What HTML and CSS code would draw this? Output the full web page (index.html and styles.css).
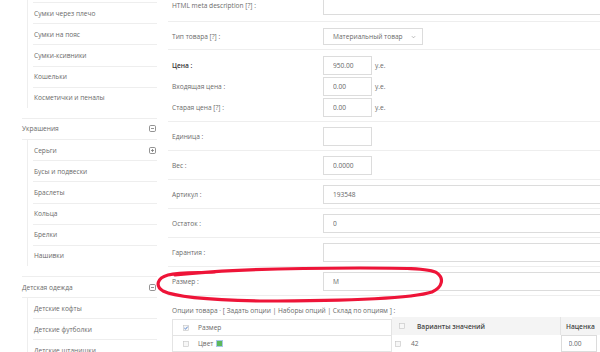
FILE: index.html
```html
<!DOCTYPE html>
<html lang="ru">
<head>
    <meta charset="UTF-8">
    <meta name="viewport" content="width=device-width, initial-scale=1.0">
    <title>Редактирование товара</title>
    <link rel="stylesheet" href="styles.css">
</head>
<body>
    <div class="page">
        <aside class="sidebar">
            <ul class="sub first">
                <li>Сумки через плечо</li>
                <li>Сумки на пояс</li>
                <li>Сумки-ксивники</li>
                <li>Кошельки</li>
                <li>Косметички и пеналы</li>
            </ul>

            <div class="group">
                <div class="group-head">
                    <span>Украшения</span>
                    <svg class="tree-icon" viewBox="0 0 7 7"><rect x="0.5" y="0.5" width="6" height="6" rx="1.2"/><path d="M2 3.5h3"/></svg>
                </div>
                <ul class="sub">
                    <li>
                        <span>Серьги</span>
                        <svg class="tree-icon" viewBox="0 0 7 7"><rect x="0.5" y="0.5" width="6" height="6" rx="1.2"/><path d="M2 3.5h3M3.5 2v3"/></svg>
                    </li>
                    <li>Бусы и подвески</li>
                    <li>Браслеты</li>
                    <li>Кольца</li>
                    <li>Брелки</li>
                    <li>Нашивки</li>
                </ul>
            </div>

            <div class="group">
                <div class="group-head">
                    <span>Детская одежда</span>
                    <svg class="tree-icon" viewBox="0 0 7 7"><rect x="0.5" y="0.5" width="6" height="6" rx="1.2"/><path d="M2 3.5h3"/></svg>
                </div>
                <ul class="sub">
                    <li>Детские кофты</li>
                    <li>Детские футболки</li>
                    <li>Детские штанишки</li>
                </ul>
            </div>
        </aside>

        <main class="form">
            <div class="row meta">
                <label>HTML meta description [?] :</label>
                <input class="field wide" type="text" value="">
            </div>

            <div class="row type">
                <label>Тип товара [?] :</label>
                <div class="select">
                    <span>Материальный товар</span>
                    <svg class="chevron" viewBox="0 0 6 4"><path d="M1 1l2 2 2-2"/></svg>
                </div>
            </div>

            <div class="row price">
                <div class="line">
                    <label class="strong">Цена :</label>
                    <input class="field short" type="text" value="950.00">
                    <span class="unit">у.е.</span>
                </div>
                <div class="line">
                    <label>Входящая цена :</label>
                    <input class="field short" type="text" value="0.00">
                    <span class="unit">у.е.</span>
                </div>
                <div class="line">
                    <label>Старая цена [?] :</label>
                    <input class="field short" type="text" value="0.00">
                    <span class="unit">у.е.</span>
                </div>
            </div>

            <div class="row">
                <label>Единица :</label>
                <input class="field short" type="text" value="">
            </div>

            <div class="row">
                <label>Вес :</label>
                <input class="field short" type="text" value="0.0000">
            </div>

            <div class="row">
                <label>Артикул :</label>
                <input class="field wide" type="text" value="193548">
            </div>

            <div class="row">
                <label>Остаток :</label>
                <input class="field wide" type="text" value="0">
            </div>

            <div class="row">
                <label>Гарантия :</label>
                <input class="field wide" type="text" value="">
            </div>

            <div class="row">
                <label>Размер :</label>
                <input class="field wide" type="text" value="M">
            </div>

            <div class="options-title">
                Опции товара · [ Задать опции | Наборы опций | Склад по опциям ] :
            </div>

            <div class="options">
                <table class="opt-list">
                    <tr>
                        <td class="cb-cell">
                            <svg class="cb" viewBox="0 0 7 7"><rect x="0.5" y="0.5" width="6" height="6"/><path class="tick" d="M1.6 3.6l1.3 1.3 2.6-3"/></svg>
                        </td>
                        <td>Размер</td>
                    </tr>
                    <tr>
                        <td class="cb-cell">
                            <svg class="cb" viewBox="0 0 7 7"><rect x="0.5" y="0.5" width="6" height="6"/></svg>
                        </td>
                        <td>Цвет <span class="swatch"></span></td>
                    </tr>
                </table>

                <table class="variants">
                    <tr class="head">
                        <th class="cb-cell">
                            <svg class="cb" viewBox="0 0 7 7"><rect x="0.5" y="0.5" width="6" height="6"/></svg>
                        </th>
                        <th class="name">Варианты значений</th>
                        <th class="markup">Наценка</th>
                    </tr>
                    <tr>
                        <td class="cb-cell row-cb">
                            <svg class="cb" viewBox="0 0 7 7"><rect x="0.5" y="0.5" width="6" height="6"/></svg>
                        </td>
                        <td class="value">42</td>
                        <td class="markup-cell"><input class="field markup-field" type="text" value="0.00"></td>
                    </tr>
                </table>
            </div>
        </main>

        <svg class="marker" viewBox="0 0 600 352">
            <path d="M175 275 C220 270 300 268 360 268 C400 268 430 268 437 273 C444 278 443 287 432 292 C410 299 330 301 260 301 C210 300 175 297 163 291 C155 286 157 278 168 275 C180 272 200 273 215 272"/>
        </svg>
    </div>
</body>
</html>
```

FILE: styles.css
```css
html,
body {
    margin: 0;
    padding: 0;
}

body {
    font-family: "Open Sans", sans-serif;
    font-size: 6.6px;
    color: #6a6a6a;
    background-color: #ffffff;
    overflow: hidden;
}

.page {
    position: relative;
    display: flex;
    width: 600px;
    height: 352px;
    overflow: hidden;
}

/* ---- sidebar tree ---- */

.sidebar {
    flex: none;
    width: 135px;
    padding: 0 3px 0 22px;
}

.sub {
    list-style: none;
    margin: 0 0 0 5px;
    padding: 0 0 0 5px;
    border-left: 1px solid #eeeeee;
}

.sub.first {
    padding-top: 2px;
}

.sub.first li:first-child {
    border-top: 1px solid #eeeeee;
}

.sub li {
    display: flex;
    align-items: center;
    justify-content: space-between;
    height: 20.2px;
    padding-left: 1px;
    border-bottom: 1px solid #eeeeee;
    white-space: nowrap;
}

.sub li:last-child {
    border-bottom: none;
}

.group {
    margin-top: 10px;
}

.group-head {
    display: flex;
    align-items: center;
    justify-content: space-between;
    height: 20px;
    border-top: 1px solid #eeeeee;
    border-bottom: 1px solid #eeeeee;
}

.tree-icon {
    width: 7px;
    height: 7px;
    margin-right: 1px;
    fill: none;
    stroke: #777777;
    stroke-width: 0.8;
}

/* ---- form ---- */

.form {
    flex: 1;
    min-width: 0;
    padding-left: 8px;
}

.row {
    display: flex;
    align-items: center;
    padding: 5px 0 4px 4px;
    border-bottom: 1px solid #eeeeee;
}

.row.meta {
    margin-top: -9px;
    padding-bottom: 6px;
}

.row.type {
    padding-top: 6px;
}

.row.price {
    flex-direction: column;
    align-items: stretch;
    gap: 2px;
    padding-top: 6px;
}

.line {
    display: flex;
    align-items: center;
}

label {
    flex: none;
    width: 151px;
    white-space: nowrap;
}

label.strong {
    color: #333333;
    font-weight: 600;
}

.field {
    box-sizing: border-box;
    height: 19px;
    padding: 0 9px;
    border: 1px solid #dcdcdc;
    border-radius: 0;
    background-color: #ffffff;
    font-family: inherit;
    font-size: inherit;
    color: #666666;
    outline: none;
}

.field.short {
    width: 49px;
}

.field.wide {
    flex: none;
    width: 320px;
}

.unit {
    margin-left: 3px;
}

.select {
    box-sizing: border-box;
    display: flex;
    align-items: center;
    justify-content: space-between;
    width: 100px;
    height: 17px;
    padding: 0 6px 0 9px;
    border: 1px solid #dcdcdc;
    white-space: nowrap;
}

.chevron {
    width: 5px;
    height: 4px;
    fill: none;
    stroke: #999999;
    stroke-width: 0.8;
}

/* ---- options ---- */

.options-title {
    padding: 8px 0 1px 4px;
    line-height: 14px;
    white-space: nowrap;
}

.options {
    display: flex;
    align-items: flex-start;
    margin-left: 4px;
}

table {
    border-collapse: collapse;
}

.opt-list {
    flex: none;
    width: 220px;
    border: 1px solid #e4e4e4;
}

.opt-list td {
    height: 15px;
    padding: 0;
    border-bottom: 1px solid #e4e4e4;
    vertical-align: middle;
}

.opt-list .cb-cell {
    width: 25px;
    text-align: center;
}

.cb {
    display: block;
    width: 6px;
    height: 6px;
    margin: 0 auto;
    fill: #f7f7f7;
    stroke: #c4c4c4;
    stroke-width: 0.7;
}

.cb .tick {
    fill: none;
    stroke: #3a6fc4;
    stroke-width: 1;
}

.swatch {
    display: inline-block;
    width: 5px;
    height: 5px;
    margin-left: 1px;
    vertical-align: -0.5px;
    border: 1px solid #a8c8e8;
    background-color: #5cb85c;
}

.variants {
    flex: none;
    width: 230px;
    margin-top: -2px;
}

.variants th {
    height: 18px;
    padding: 0;
    background-color: #f4f4f4;
    color: #444444;
    font-weight: 600;
    text-align: left;
    vertical-align: middle;
    white-space: nowrap;
}

.variants .cb-cell {
    width: 25px;
}

.variants th.cb-cell .cb {
    margin-left: 7px;
}

.variants .name {
    width: 143px;
}

.variants .markup {
    padding-left: 5px;
    border-left: 1px solid #e4e4e4;
}

.variants td {
    height: 17px;
    padding: 0;
    vertical-align: middle;
}

.variants .row-cb .cb {
    margin-left: 3px;
}

.variants .value {
    text-indent: -6px;
}

.markup-cell {
    padding-left: 1px;
}

.markup-field {
    width: 36px;
    height: 17px;
    padding: 0 7px;
}

/* ---- hand drawn marker over the size row ---- */

.marker {
    position: absolute;
    top: 0;
    left: 0;
    width: 600px;
    height: 352px;
    pointer-events: none;
    fill: none;
    stroke: #ee1438;
    stroke-width: 3.2;
    stroke-linecap: round;
    stroke-linejoin: round;
}
```
